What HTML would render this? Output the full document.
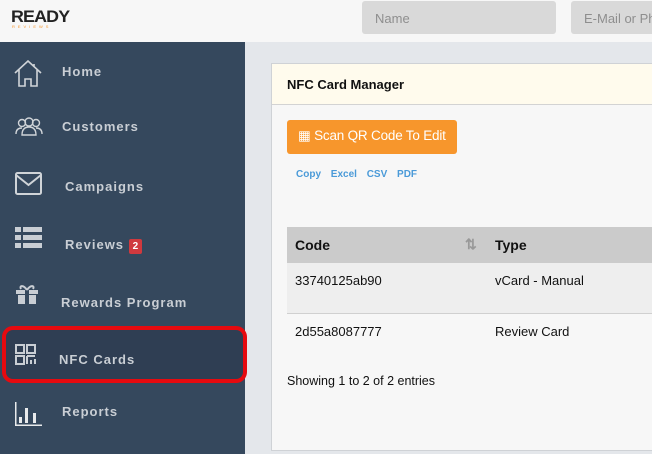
<!DOCTYPE html>
<html><head><style>
*{margin:0;padding:0;box-sizing:border-box}
body{width:652px;height:454px;overflow:hidden;font-family:"Liberation Sans",Arial,sans-serif;background:#e4e7eb;position:relative}
.top{position:absolute;left:0;top:0;width:652px;height:42px;background:#f7f7f7}
.inp{position:absolute;top:1px;height:33px;background:#d9d9d9;border-radius:3px;color:#8e8e8e;font-size:13px;padding:10px 13px}
.side{position:absolute;left:0;top:42px;width:245px;height:412px;background:#35485d}
.it{position:absolute;color:#c9ced4;font-weight:bold;font-size:13px;letter-spacing:1px}
.ic{position:absolute}
.card{position:absolute;left:271px;top:63px;width:390px;height:388px;background:#f7f7f7;border:1px solid #cfd2d6}
</style></head><body>
<div class="top">
<div style="position:absolute;left:11px;top:7px;font-weight:900;font-size:17px;color:#222;letter-spacing:-0.8px;transform:scaleX(1.05);transform-origin:left">READY</div>
<div style="position:absolute;left:12px;top:24px;font-size:4px;color:#f7962c;letter-spacing:3px">REVIEWS</div>
<div class="inp" style="left:362px;width:194px">Name</div>
<div class="inp" style="left:571px;width:100px">E-Mail or Ph</div>
</div>
<div class="side">
<svg class="ic" style="left:14px;top:18px" width="28" height="28" viewBox="0 0 28 28" fill="none" stroke="#d0d4d8" stroke-width="1.6"><path d="M1 13L14 1 27 13M5 10V26H11V19H17V26H23V10M20 4V7"/></svg>
<div class="it" style="left:62px;top:22px">Home</div>
<svg class="ic" style="left:15px;top:75px" width="28" height="20" viewBox="0 0 28 20" fill="none" stroke="#d0d4d8" stroke-width="1.4"><circle cx="7" cy="6" r="3.5"/><circle cx="14" cy="5" r="4"/><circle cx="21" cy="6" r="3.5"/><path d="M1 17C1 12 4 11 7 11M27 17C27 12 24 11 21 11M7 18C7 12 10 10 14 10S21 12 21 18Z"/></svg>
<div class="it" style="left:62px;top:77px">Customers</div>
<svg class="ic" style="left:15px;top:130px" width="27" height="23" viewBox="0 0 27 23" fill="none" stroke="#d0d4d8" stroke-width="2"><rect x="1" y="1" width="25" height="21" rx="1.5"/><path d="M1 3L13.5 13 26 3"/></svg>
<div class="it" style="left:65px;top:137px">Campaigns</div>
<svg class="ic" style="left:15px;top:185px" width="27" height="21" viewBox="0 0 27 21" fill="#c9ced4"><rect x="0" y="0" width="6" height="5"/><rect x="8" y="0" width="19" height="5"/><rect x="0" y="8" width="6" height="5"/><rect x="8" y="8" width="19" height="5"/><rect x="0" y="16" width="6" height="5"/><rect x="8" y="16" width="19" height="5"/></svg>
<div class="it" style="left:65px;top:195px">Reviews <span style="display:inline-block;background:#d0393e;color:#fff;font-size:10px;padding:2px 4px;border-radius:2px;letter-spacing:0">2</span></div>
<svg class="ic" style="left:15px;top:242px" width="24" height="20" viewBox="0 0 24 20" fill="#c9ced4"><path d="M1 6H23V10H1ZM3 11H21V20H3Z"/><rect x="10" y="6" width="4" height="14" fill="#35485d"/><path d="M12 6C8 0 4 2 6 5M12 6C16 0 20 2 18 5" fill="none" stroke="#c9ced4" stroke-width="2"/></svg>
<div class="it" style="left:61px;top:253px">Rewards Program</div>
<div style="position:absolute;left:2px;top:284px;width:245px;height:57px;border:4px solid #e60a0f;border-radius:11px;background:#2f3e53"></div>
<svg class="ic" style="left:15px;top:302px" width="21" height="21" viewBox="0 0 21 21" fill="none" stroke="#c9ced4" stroke-width="2"><rect x="1" y="1" width="8" height="8"/><rect x="12" y="1" width="8" height="8"/><rect x="1" y="12" width="8" height="8"/><path d="M12 12H20M12 12V20M16 16V20M20 15V20"/></svg>
<div class="it" style="left:59px;top:310px">NFC Cards</div>
<svg class="ic" style="left:15px;top:360px" width="27" height="24" viewBox="0 0 27 24" fill="#e8eaec"><rect x="0" y="0" width="1.5" height="24"/><rect x="0" y="22.5" width="27" height="1.5"/><rect x="4" y="15" width="3" height="6"/><rect x="10" y="6" width="3" height="15"/><rect x="18" y="11" width="3" height="10"/></svg>
<div class="it" style="left:62px;top:362px">Reports</div>
</div>
<div class="card">
<div style="height:41px;background:#fffbed;border-bottom:1px solid #d3d3d3;padding:13px 15px;font-weight:bold;font-size:13px;color:#111">NFC Card Manager</div>
<div style="position:absolute;left:15px;top:56px;width:170px;height:34px;background:#f7962c;border-radius:3px;color:#fff;font-size:13.5px;padding:8px 11px;white-space:nowrap;letter-spacing:-0.2px">▦ Scan QR Code To Edit</div>
<div style="position:absolute;left:24px;top:105px;font-size:10px;font-weight:bold;color:#4a9ad8;word-spacing:7px">Copy Excel CSV PDF</div>
<div style="position:absolute;left:15px;top:163px;width:380px;height:36px;background:#cbcbcb;font-size:14px;font-weight:bold;color:#111">
<span style="position:absolute;left:8px;top:10px">Code</span><span style="position:absolute;left:178px;top:9px;color:#999">⇅</span><span style="position:absolute;left:208px;top:10px">Type</span></div>
<div style="position:absolute;left:15px;top:199px;width:380px;height:51px;background:#eeeeee;border-bottom:1px solid #d0d0d0;font-size:13px;color:#111"><span style="position:absolute;left:8px;top:10px">33740125ab90</span><span style="position:absolute;left:208px;top:10px">vCard - Manual</span></div>
<div style="position:absolute;left:15px;top:250px;width:380px;height:50px;font-size:13px;color:#111"><span style="position:absolute;left:8px;top:10px">2d55a8087777</span><span style="position:absolute;left:208px;top:10px">Review Card</span></div>
<div style="position:absolute;left:15px;top:310px;font-size:12.5px;color:#111">Showing 1 to 2 of 2 entries</div>
</div>
</body></html>
